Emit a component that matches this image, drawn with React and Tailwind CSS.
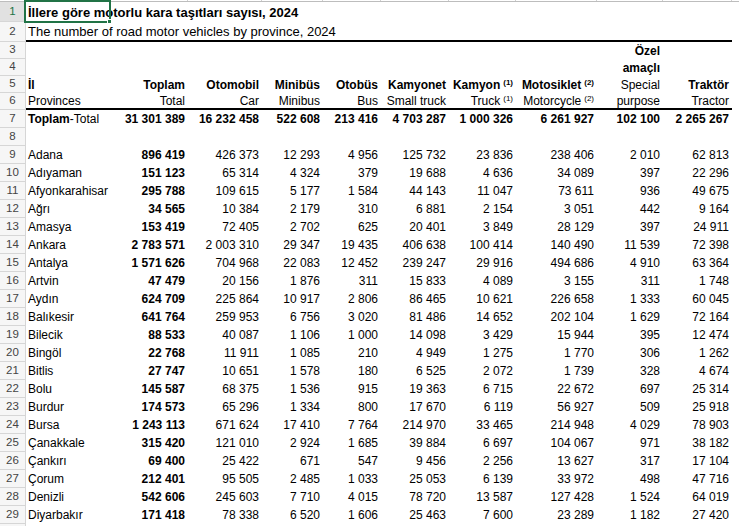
import React from "react";

const COLS = "grid grid-cols-[84px_78px_74px_61px_58px_68px_67px_81px_66px_69px]";

const rows = [
  ["Adana", "896 419", "426 373", "12 293", "4 956", "125 732", "23 836", "238 406", "2 010", "62 813"],
  ["Adıyaman", "151 123", "65 314", "4 324", "379", "19 688", "4 636", "34 089", "397", "22 296"],
  ["Afyonkarahisar", "295 788", "109 615", "5 177", "1 584", "44 143", "11 047", "73 611", "936", "49 675"],
  ["Ağrı", "34 565", "10 384", "2 179", "310", "6 881", "2 154", "3 051", "442", "9 164"],
  ["Amasya", "153 419", "72 405", "2 702", "625", "20 401", "3 849", "28 129", "397", "24 911"],
  ["Ankara", "2 783 571", "2 003 310", "29 347", "19 435", "406 638", "100 414", "140 490", "11 539", "72 398"],
  ["Antalya", "1 571 626", "704 968", "22 083", "12 452", "239 247", "29 916", "494 686", "4 910", "63 364"],
  ["Artvin", "47 479", "20 156", "1 876", "311", "15 833", "4 089", "3 155", "311", "1 748"],
  ["Aydın", "624 709", "225 864", "10 917", "2 806", "86 465", "10 621", "226 658", "1 333", "60 045"],
  ["Balıkesir", "641 764", "259 953", "6 756", "3 020", "81 486", "14 652", "202 104", "1 629", "72 164"],
  ["Bilecik", "88 533", "40 087", "1 106", "1 000", "14 098", "3 429", "15 944", "395", "12 474"],
  ["Bingöl", "22 768", "11 911", "1 085", "210", "4 949", "1 275", "1 770", "306", "1 262"],
  ["Bitlis", "27 747", "10 651", "1 578", "180", "6 525", "2 072", "1 739", "328", "4 674"],
  ["Bolu", "145 587", "68 375", "1 536", "915", "19 363", "6 715", "22 672", "697", "25 314"],
  ["Burdur", "174 573", "65 296", "1 334", "800", "17 670", "6 119", "56 927", "509", "25 918"],
  ["Bursa", "1 243 113", "671 624", "17 410", "7 764", "214 970", "33 465", "214 948", "4 029", "78 903"],
  ["Çanakkale", "315 420", "121 010", "2 924", "1 685", "39 884", "6 697", "104 067", "971", "38 182"],
  ["Çankırı", "69 400", "25 422", "671", "547", "9 456", "2 256", "13 627", "317", "17 104"],
  ["Çorum", "212 401", "95 505", "2 485", "1 033", "25 053", "6 139", "33 972", "498", "47 716"],
  ["Denizli", "542 606", "245 603", "7 710", "4 015", "78 720", "13 587", "127 428", "1 524", "64 019"],
  ["Diyarbakır", "171 418", "78 338", "6 520", "1 606", "25 463", "7 600", "23 289", "1 182", "27 420"],
];

const total = ["31 301 389", "16 232 458", "522 608", "213 416", "4 703 287", "1 000 326", "6 261 927", "102 100", "2 265 267"];

function Row({ n, h, active, line, children }) {
  return (
    <div className="flex" style={{ height: h }}>
      <div
        className={`w-[26px] shrink-0 flex items-center justify-center border-r border-b border-[#d6d6d6] text-[11.5px] ${
          active ? "bg-[#e1e1e1] text-[#217346]" : "bg-[#f6f6f6] text-[#444]"
        }`}
      >
        {n}
      </div>
      <div className={`w-[706px] ${COLS} items-center ${line ? "border-b-2 border-black" : ""}`}>{children}</div>
    </div>
  );
}

const Sup = ({ children }) => <sup className="text-[8px] ml-[3px] -top-[4px]">{children}</sup>;

const R = ({ children, bold }) => (
  <div className={`text-right pr-[3px] whitespace-nowrap ${bold ? "font-bold" : ""}`}>{children}</div>
);

export default function App() {
  return (
    <div className="relative w-[739px] h-[526px] overflow-hidden bg-white text-[12px] text-black font-['Liberation_Sans',Arial,sans-serif] leading-none">
      {/* column header bottom edge */}
      <div className="h-[2px] flex border-b border-[#bdbdbd]">
        {[26, 84, 78, 74, 61, 58, 68, 67, 81, 66, 69].map((w, i) => (
          <div key={i} className="h-px border-r border-[#d0d0d0]" style={{ width: w }} />
        ))}
      </div>

      <Row n={1} h={20} active>
        <div className="col-span-10 pl-[2px] font-bold text-[13px] whitespace-nowrap">
          İllere göre motorlu kara taşıtları sayısı, 2024
        </div>
      </Row>
      <Row n={2} h={20} line>
        <div className="col-span-10 pl-[2px] text-[13px] whitespace-nowrap">
          The number of road motor vehicles by province, 2024
        </div>
      </Row>
      <Row n={3} h={17}>
        <div className="col-span-8" />
        <R bold>Özel</R>
      </Row>
      <Row n={4} h={17}>
        <div className="col-span-8" />
        <R bold>amaçlı</R>
      </Row>
      <Row n={5} h={17}>
        <div className="pl-[2px] font-bold">İl</div>
        <R bold>Toplam</R>
        <R bold>Otomobil</R>
        <R bold>Minibüs</R>
        <R bold>Otobüs</R>
        <R bold>Kamyonet</R>
        <R bold>
          Kamyon<Sup>(1)</Sup>
        </R>
        <R bold>
          Motosiklet<Sup>(2)</Sup>
        </R>
        <R>Special</R>
        <R bold>Traktör</R>
      </Row>
      <Row n={6} h={17} line>
        <div className="pl-[2px]">Provinces</div>
        <R>Total</R>
        <R>Car</R>
        <R>Minibus</R>
        <R>Bus</R>
        <R>Small truck</R>
        <R>
          Truck<Sup>(1)</Sup>
        </R>
        <R>
          Motorcycle<Sup>(2)</Sup>
        </R>
        <R>purpose</R>
        <R>Tractor</R>
      </Row>
      <Row n={7} h={18}>
        <div className="pl-[2px] whitespace-nowrap">
          <span className="font-bold">Toplam</span>-Total
        </div>
        {total.map((v, i) => (
          <R key={i} bold>
            {v}
          </R>
        ))}
      </Row>
      <Row n={8} h={18} />
      {rows.map((r, i) => (
        <Row key={r[0]} n={9 + i} h={18}>
          <div className="pl-[2px] whitespace-nowrap">{r[0]}</div>
          {r.slice(1).map((v, j) => (
            <R key={j} bold={j === 0}>
              {v}
            </R>
          ))}
        </Row>
      ))}
      <Row h={18} />

      {/* active cell A1 */}
      <div className="absolute left-[24px] top-0 w-[87px] h-[23px] border-2 border-[#217346] pointer-events-none" />
      <div className="absolute left-[107px] top-[19px] w-[5px] h-[5px] bg-[#217346] border border-white" />
    </div>
  );
}
